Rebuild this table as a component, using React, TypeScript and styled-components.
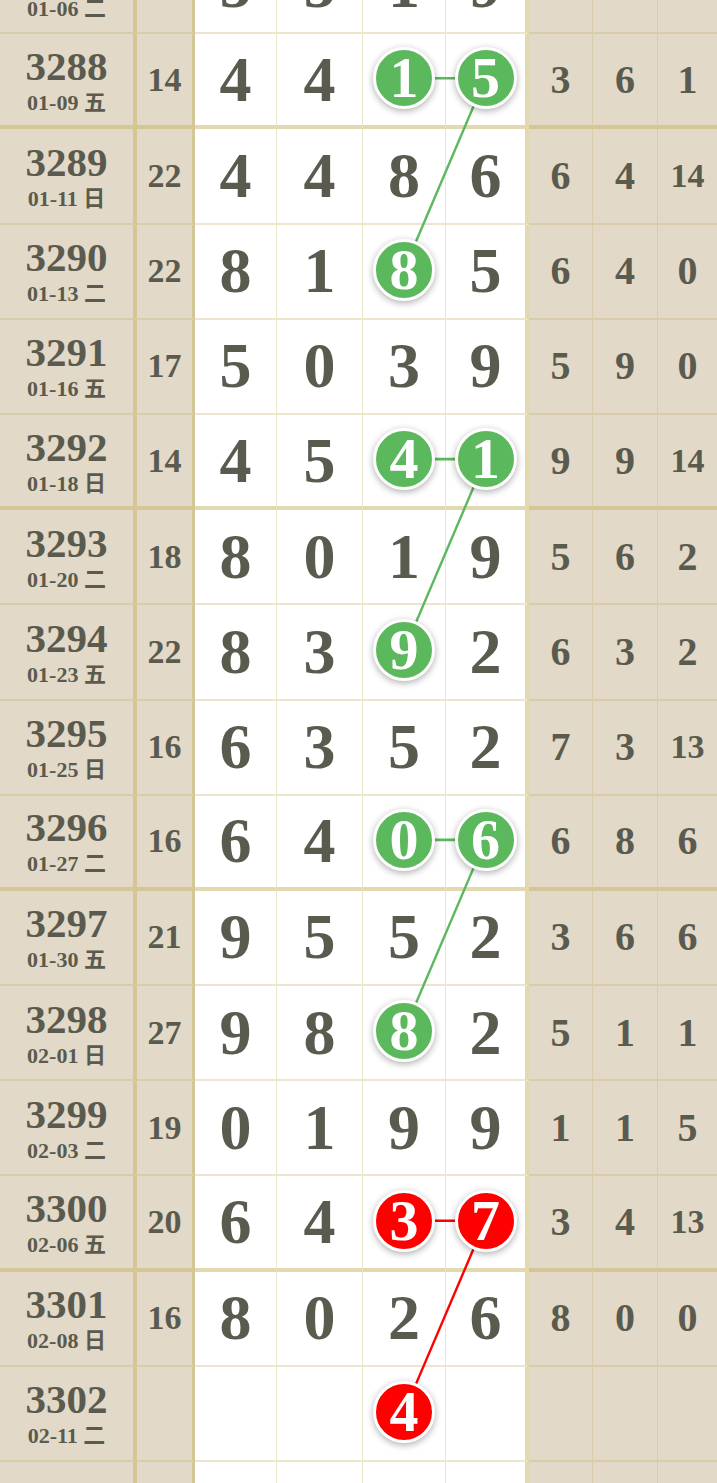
import React from "react";
import styled, { createGlobalStyle } from "styled-components";

// chart constants
const ROW_H = 95.2;
const COL_W = [137, 58, 82, 86, 83, 83, 64, 65, 59];
const LINE = "rgba(200, 180, 100, 0.33)";
const LINE_DARK = "rgba(200, 180, 100, 0.5)";
const GREEN = "#5cb85c";
const RED = "#ff0000";
const TEXT = "#5a5b4e";

type Row = {
  issue: string;
  date: string;
  sum: string;
  nums: string[];
  extra: string[];
  balls?: number[];
  color?: string;
};

const rows: Row[] = [
  { issue: "3287", date: "01-06 二", sum: "20", nums: ["5", "5", "1", "9"], extra: ["5", "2", "0"] },
  { issue: "3288", date: "01-09 五", sum: "14", nums: ["4", "4", "1", "5"], extra: ["3", "6", "1"], balls: [2, 3], color: GREEN },
  { issue: "3289", date: "01-11 日", sum: "22", nums: ["4", "4", "8", "6"], extra: ["6", "4", "14"] },
  { issue: "3290", date: "01-13 二", sum: "22", nums: ["8", "1", "8", "5"], extra: ["6", "4", "0"], balls: [2], color: GREEN },
  { issue: "3291", date: "01-16 五", sum: "17", nums: ["5", "0", "3", "9"], extra: ["5", "9", "0"] },
  { issue: "3292", date: "01-18 日", sum: "14", nums: ["4", "5", "4", "1"], extra: ["9", "9", "14"], balls: [2, 3], color: GREEN },
  { issue: "3293", date: "01-20 二", sum: "18", nums: ["8", "0", "1", "9"], extra: ["5", "6", "2"] },
  { issue: "3294", date: "01-23 五", sum: "22", nums: ["8", "3", "9", "2"], extra: ["6", "3", "2"], balls: [2], color: GREEN },
  { issue: "3295", date: "01-25 日", sum: "16", nums: ["6", "3", "5", "2"], extra: ["7", "3", "13"] },
  { issue: "3296", date: "01-27 二", sum: "16", nums: ["6", "4", "0", "6"], extra: ["6", "8", "6"], balls: [2, 3], color: GREEN },
  { issue: "3297", date: "01-30 五", sum: "21", nums: ["9", "5", "5", "2"], extra: ["3", "6", "6"] },
  { issue: "3298", date: "02-01 日", sum: "27", nums: ["9", "8", "8", "2"], extra: ["5", "1", "1"], balls: [2], color: GREEN },
  { issue: "3299", date: "02-03 二", sum: "19", nums: ["0", "1", "9", "9"], extra: ["1", "1", "5"] },
  { issue: "3300", date: "02-06 五", sum: "20", nums: ["6", "4", "3", "7"], extra: ["3", "4", "13"], balls: [2, 3], color: RED },
  { issue: "3301", date: "02-08 日", sum: "16", nums: ["8", "0", "2", "6"], extra: ["8", "0", "0"] },
  { issue: "3302", date: "02-11 二", sum: "", nums: ["", "", "4", ""], extra: ["", "", ""], balls: [2], color: RED },
  { issue: "3303", date: "02-14 五", sum: "", nums: ["", "", "", ""], extra: ["", "", ""] },
];

const GlobalStyle = createGlobalStyle`
  html, body {
    margin: 0;
    padding: 0;
    overflow: hidden;
    background: #ffffff;
  }
  body {
    font-family: "Liberation Serif", "Noto Sans CJK SC", serif;
    color: ${TEXT};
  }
`;

const Chart = styled.div`
  position: relative;
  width: 717px;
  margin-top: -61px;
`;

const ChartRow = styled.div<{ $thick: boolean }>`
  display: grid;
  grid-template-columns: ${COL_W.map((w) => `${w}px`).join(" ")};
  height: ${ROW_H}px;
  --row-border: ${(p) => (p.$thick ? `4px solid ${LINE_DARK}` : `2px solid ${LINE}`)};
`;

const Cell = styled.div<{ $white?: boolean; $sep?: number }>`
  box-sizing: border-box;
  display: flex;
  flex-direction: column;
  align-items: center;
  justify-content: center;
  background: ${(p) => (p.$white ? "#ffffff" : "#e2d9c8")};
  border-bottom: var(--row-border);
  border-right: ${(p) => (p.$sep ? `${p.$sep}px solid ${LINE_DARK}` : `1px solid ${LINE}`)};
  font-weight: bold;
  color: ${TEXT};
  &:last-child {
    border-right: none;
  }
`;

const IssueNo = styled.div`
  font-size: 41px;
  line-height: 41px;
`;

const IssueDate = styled.div`
  font-size: 22px;
  line-height: 22px;
  margin-top: 5px;
  white-space: nowrap;
`;

const SumText = styled.span`
  font-size: 34px;
  line-height: 1;
`;

const BigNum = styled.span`
  font-size: 64px;
  line-height: 1;
`;

const SmallNum = styled.span<{ $two: boolean }>`
  font-size: ${(p) => (p.$two ? "34px" : "40px")};
  line-height: 1;
`;

const Ball = styled.span<{ $color: string }>`
  position: relative;
  z-index: 2;
  display: flex;
  align-items: center;
  justify-content: center;
  width: 56px;
  height: 56px;
  border: 3px solid #ffffff;
  border-radius: 50%;
  background: ${(p) => p.$color};
  box-shadow: 0 2px 7px rgba(0, 0, 0, 0.32);
  color: #ffffff;
  font-size: 58px;
  line-height: 56px;
  margin-top: -3px;
`;

const Links = styled.svg`
  position: absolute;
  left: 0;
  top: 0;
  z-index: 1;
  pointer-events: none;
`;

const isThick = (issue: string) => (Number(issue) - 3288) % 4 === 0;

// x centres of the two ball columns
const colLeft = (i: number) => COL_W.slice(0, i).reduce((a, b) => a + b, 0);
const BALL_X = [colLeft(4) + (COL_W[4] - 1) / 2, colLeft(5) + (COL_W[5] - 4) / 2];
const ballY = (k: number) => k * ROW_H + (ROW_H - (isThick(rows[k].issue) ? 4 : 2)) / 2 - 1.5;

function App() {
  const lines: React.ReactNode[] = [];
  rows.forEach((r, k) => {
    if (r.balls && r.balls.length === 2) {
      const y = ballY(k);
      lines.push(<line key={`h${k}`} x1={BALL_X[0]} y1={y} x2={BALL_X[1]} y2={y} stroke={r.color} strokeWidth={2.6} />);
      const next = rows[k + 2];
      if (next && next.balls) {
        lines.push(
          <line key={`d${k}`} x1={BALL_X[1]} y1={y} x2={BALL_X[0]} y2={ballY(k + 2)} stroke={r.color} strokeWidth={2.4} />
        );
      }
    }
  });

  return (
    <>
      <GlobalStyle />
      <Chart>
        {rows.map((r) => (
          <ChartRow key={r.issue} $thick={isThick(r.issue)}>
            <Cell $sep={4}>
              <IssueNo>{r.issue}</IssueNo>
              <IssueDate>{r.date}</IssueDate>
            </Cell>
            <Cell $sep={3}>
              <SumText>{r.sum}</SumText>
            </Cell>
            {r.nums.map((n, i) => (
              <Cell key={i} $white $sep={i === 3 ? 4 : 0}>
                {r.balls && r.balls.includes(i) ? (
                  <Ball $color={r.color || GREEN}>{n}</Ball>
                ) : (
                  <BigNum>{n}</BigNum>
                )}
              </Cell>
            ))}
            {r.extra.map((n, i) => (
              <Cell key={`e${i}`}>
                <SmallNum $two={n.length > 1}>{n}</SmallNum>
              </Cell>
            ))}
          </ChartRow>
        ))}
        <Links width={717} height={rows.length * ROW_H}>
          {lines}
        </Links>
      </Chart>
    </>
  );
}

export default App;
